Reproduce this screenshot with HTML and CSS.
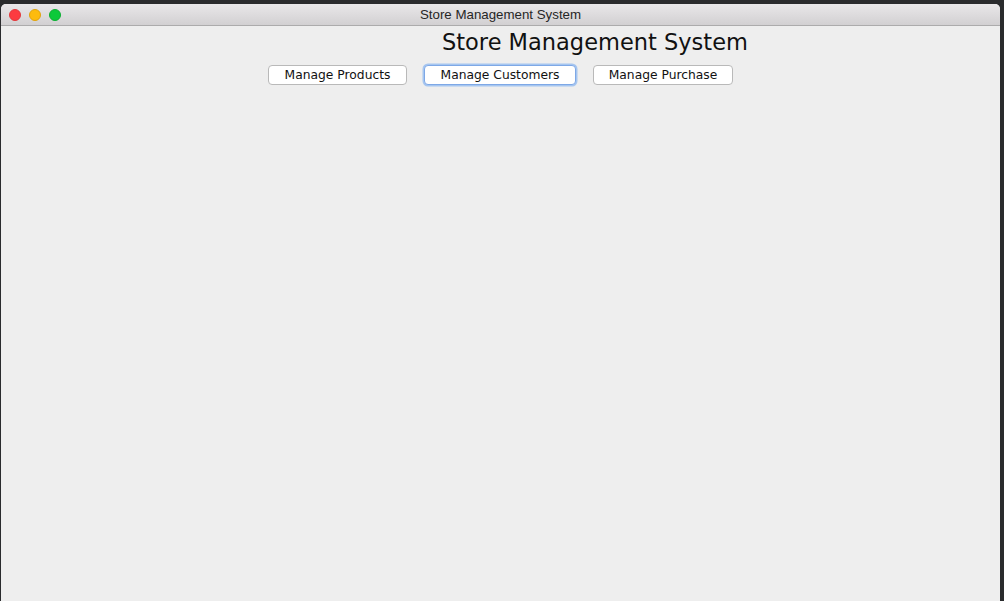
FILE: index.html
```html
<!DOCTYPE html>
<html>
<head>
<meta charset="utf-8">
<link rel="stylesheet" href="styles.css">
</head>
<body>
<div class="window">
  <div class="titlebar">
    <div class="lights">
      <span class="light red"></span>
      <span class="light yellow"></span>
      <span class="light green"></span>
    </div>
    <div class="title">Store Management System</div>
  </div>
  <div class="content">
    <div class="heading-row">
      <h1 class="heading">Store Management System</h1>
    </div>
    <div class="buttons">
      <button class="btn btn-products">Manage Products</button>
      <button class="btn btn-customers focused">Manage Customers</button>
      <button class="btn btn-purchase">Manage Purchase</button>
    </div>
  </div>
</div>
</body>
</html>
```
FILE: styles.css
```css
html, body {
  margin: 0;
  padding: 0;
  height: 100%;
}
body {
  background: #2a2b2d;
  overflow: hidden;
}
.window {
  margin: 4px 0 0 1px;
  width: 999px;
  height: 597px;
  background: #eeeeee;
  border-radius: 5px 5px 0 0;
  overflow: hidden;
  display: flex;
  flex-direction: column;
}
.titlebar {
  height: 21px;
  flex: none;
  background: linear-gradient(#e9e7e9, #d2d0d2);
  border-bottom: 1px solid #acabac;
  display: flex;
  align-items: center;
  position: relative;
}
.lights {
  display: flex;
  gap: 8px;
  padding-left: 8px;
  padding-top: 1px;
}
.light {
  width: 12px;
  height: 12px;
  border-radius: 50%;
  box-sizing: border-box;
}
.red { background: #fc3b40; border: 1px solid #e2363a; }
.yellow { background: #fdbb0e; border: 1px solid #e0a30a; }
.green { background: #0cc93a; border: 1px solid #0bae31; }
.title {
  position: absolute;
  left: 0;
  right: 0;
  top: 0;
  line-height: 22px;
  text-align: center;
  font-family: "Liberation Sans", Arial, sans-serif;
  font-size: 13.3px;
  color: #262626;
}
.content {
  flex: 1;
  display: flex;
  flex-direction: column;
}
.heading-row {
  display: flex;
  padding-left: 441px;
  padding-top: 2px;
}
.heading {
  margin: 0;
  font-family: "DejaVu Sans", Verdana, sans-serif;
  font-weight: normal;
  font-size: 22.5px;
  line-height: 28px;
  color: #111;
}
.buttons {
  display: flex;
  justify-content: center;
  margin-top: 9px;
  gap: 17px;
}
.btn {
  height: 20px;
  padding: 0;
  box-sizing: border-box;
  background: #ffffff;
  border: 1px solid #b9b9b9;
  border-radius: 4px;
  font-family: "DejaVu Sans", Verdana, sans-serif;
  font-size: 12.3px;
  color: #111;
  line-height: 17px;
}
.btn-products { width: 139px; }
.btn-customers { width: 152px; }
.btn-purchase { width: 140px; }
.focused {
  border: 1px solid #7ea8e6;
  box-shadow: 0 0 0 1.5px #a6c6f0;
}
```
